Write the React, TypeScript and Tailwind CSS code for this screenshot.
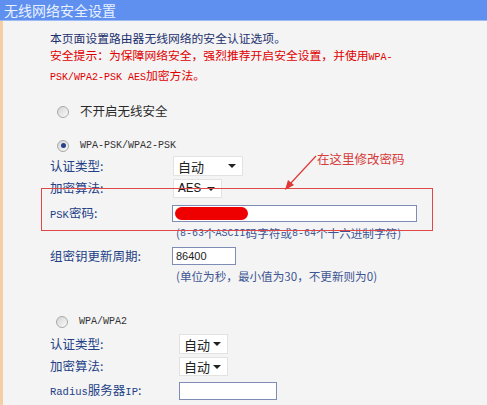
import React from 'react';

const cjk = { fontFamily: '"Noto Sans CJK SC", "Noto Sans", sans-serif' };
const mono = { fontFamily: '"Liberation Mono", "Noto Sans CJK SC", monospace' };

const Radio = ({ checked }: { checked?: boolean }) => (
  <span className="relative inline-flex h-[12px] w-[12px] items-center justify-center rounded-full border border-[#a9a9a9] bg-gradient-to-br from-[#d4d4d4] to-[#fafafa]">
    {checked && <span className="h-[5px] w-[5px] rounded-full bg-[#26408a]" />}
  </span>
);

const Select = ({ value, width }: { value: string; width: string }) => (
  <div className={`flex h-full items-center justify-between border border-[#e2e2e2] bg-white pl-[4px] pr-[6px] ${width}`}>
    <span className="text-[13px] leading-none text-[#222]" style={value === 'AES' ? mono : cjk}>
      {value}
    </span>
    <span className="h-0 w-0 border-x-[4px] border-t-[4px] border-x-transparent border-t-[#222]" />
  </div>
);

// label column then control
const Row = ({ label, left, h, mt, children }: any) => (
  <div className="flex items-center" style={{ height: h, marginTop: mt }}>
    <div className="shrink-0 text-[12.5px] text-[#233f86]" style={{ width: left, ...cjk }}>
      {label}
    </div>
    <div className="flex h-full items-center">{children}</div>
  </div>
);

export default function App() {
  return (
    <div className="h-[405px] w-[487px] overflow-hidden bg-[#f4f4f4]">
      <div className="flex h-[21px] items-center border-b border-[#9dbaf3] bg-[#5f90f0] pl-[4px]">
        <span className="text-[14px] leading-none text-[#e9f0ff]" style={cjk}>无线网络安全设置</span>
      </div>
      <div className="relative h-[384px] border-l-[3px] border-[#f3cfa3] pl-[47px] pt-[8px]">
        <div className="text-[11.8px] leading-[17px]" style={cjk}>
          <p className="text-[#1c2f6e]">本页面设置路由器无线网络的安全认证选项。</p>
          <p className="text-[#e00000]">
            安全提示：为保障网络安全，强烈推荐开启安全设置，并使用<span className="text-[10px]" style={mono}>WPA-</span>
          </p>
          <p className="text-[#e00000]">
            <span className="text-[10px]" style={mono}>PSK/WPA2-PSK AES</span>加密方法。
          </p>
        </div>

        <div className="mt-[17px] flex h-[17px] items-center gap-[11px] pl-[7px]">
          <Radio />
          <span className="text-[12.5px] text-[#2a2a2a]" style={cjk}>不开启无线安全</span>
        </div>

        <div className="mt-[17px] flex h-[17px] items-center gap-[11px] pl-[7px]">
          <Radio checked />
          <span className="text-[10px] text-[#333]" style={mono}>WPA-PSK/WPA2-PSK</span>
        </div>

        <Row label="认证类型:" left={123} h={20} mt={2}>
          <Select value="自动" width="w-[70px]" />
        </Row>
        <Row label="加密算法:" left={123} h={19} mt={3}>
          <Select value="AES" width="w-[49px]" />
        </Row>
        <Row label={<span><span style={mono} className="text-[10.5px]">PSK</span>密码:</span>} left={122} h={17} mt={7}>
          <div className="relative h-full w-[245px] border border-[#7e8cb6] bg-white">
            <div className="absolute left-[2px] top-[1px] h-[13px] w-[73px] rounded-full bg-[#ee0000]" />
          </div>
        </Row>
        <div className="mt-[3px] flex h-[17px] items-center pl-[126px] text-[11.6px] text-[#3d5593]" style={cjk}>
          (<span className="text-[10px]" style={mono}>8-63</span>个<span className="text-[10px]" style={mono}>ASCII</span>码字符或<span className="text-[10px]" style={mono}>8-64</span>个十六进制字符)
        </div>

        <Row label="组密钥更新周期:" left={122} h={18} mt={5}>
          <div className="flex h-full w-[64px] items-center border border-[#7e8cb6] bg-white pl-[3px] text-[11px] text-[#222]" style={{ fontFamily: '"Liberation Sans", sans-serif' }}>
            86400
          </div>
        </Row>
        <div className="mt-[3px] flex h-[17px] items-center pl-[126px] text-[11.6px] text-[#3d5593]" style={cjk}>
          (单位为秒，最小值为30，不更新则为0)
        </div>

        <div className="mt-[28px] flex h-[17px] items-center gap-[11px] pl-[6px]">
          <Radio />
          <span className="text-[10px] text-[#333]" style={mono}>WPA/WPA2</span>
        </div>
        <Row label="认证类型:" left={129} h={20} mt={4}>
          <Select value="自动" width="w-[49px]" />
        </Row>
        <Row label="加密算法:" left={129} h={19} mt={3}>
          <Select value="自动" width="w-[49px]" />
        </Row>
        <Row label={<span><span style={mono} className="text-[10.5px]">Radius</span>服务器<span style={mono} className="text-[10.5px]">IP</span>:</span>} left={129} h={18} mt={6}>
          <div className="h-full w-[98px] border border-[#7e8cb6] bg-white" />
        </Row>
        <div className="mt-[5px] ml-[129px] h-[4px] w-[40px] border-t-2 border-[#6f86c2]" />

        {/* annotation overlay */}
        <div className="pointer-events-none absolute left-[38px] top-[167px] h-[43px] w-[392px] border border-[#e04848]" />
        <span className="absolute left-[314px] top-[129px] text-[12.5px] text-[#d63c3c]" style={cjk}>在这里修改密码</span>
        <svg className="absolute left-[276px] top-[130px]" width="42" height="42" viewBox="0 0 42 42">
          <line x1="37" y1="5" x2="11" y2="33" stroke="#e03838" strokeWidth="1.2" />
          <polygon points="6,39 9,29 15,34" fill="#e03838" />
        </svg>
      </div>
    </div>
  );
}
